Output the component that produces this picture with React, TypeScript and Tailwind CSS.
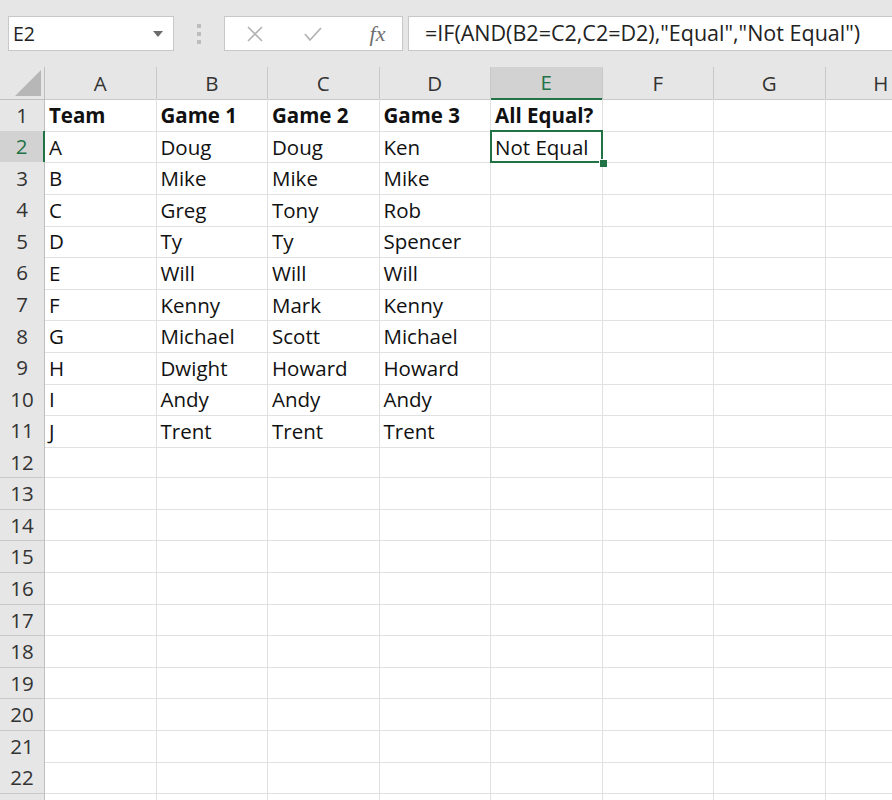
import React from "react";

const COLS = ["A", "B", "C", "D", "E", "F", "G", "H"];
const DATA: string[][] = [
  ["Team", "Game 1", "Game 2", "Game 3", "All Equal?"],
  ["A", "Doug", "Doug", "Ken", "Not Equal"],
  ["B", "Mike", "Mike", "Mike"],
  ["C", "Greg", "Tony", "Rob"],
  ["D", "Ty", "Ty", "Spencer"],
  ["E", "Will", "Will", "Will"],
  ["F", "Kenny", "Mark", "Kenny"],
  ["G", "Michael", "Scott", "Michael"],
  ["H", "Dwight", "Howard", "Howard"],
  ["I", "Andy", "Andy", "Andy"],
  ["J", "Trent", "Trent", "Trent"],
];

const font = { fontFamily: '"Open Sans", "Noto Sans", sans-serif' };

export default function App() {
  const rows = Array.from({ length: 23 }, (_, i) => i + 1);
  return (
    <div
      className="w-[892px] h-[800px] overflow-hidden bg-white text-[#222]"
      style={font}
    >
      {/* Formula bar */}
      <div className="h-[67px] bg-[#e6e6e6] flex items-start pt-[16px] pl-[8px]">
        <div className="w-[166px] h-[35px] bg-white border border-[#c8c8c8] flex items-center justify-between pl-[4px] pr-[10px]">
          <span className="text-[19.5px] text-[#222]">E2</span>
          <svg width="10" height="6" viewBox="0 0 10 6">
            <path d="M0 0 L10 0 L5 6 Z" fill="#6b6b6b" />
          </svg>
        </div>
        <div className="w-[50px] h-[35px] flex flex-col items-center justify-center gap-[4px]">
          <div className="w-[4px] h-[4px] bg-[#bdbdbd]" />
          <div className="w-[4px] h-[4px] bg-[#bdbdbd]" />
          <div className="w-[4px] h-[4px] bg-[#bdbdbd]" />
        </div>
        <div className="w-[179px] h-[35px] bg-white border border-[#c8c8c8] flex items-center">
          <div className="w-[58px] flex justify-center pl-[2px]">
            <svg width="18" height="18" viewBox="0 0 18 18">
              <path d="M2 2 L16 16 M16 2 L2 16" stroke="#b3b3b3" strokeWidth="1.6" />
            </svg>
          </div>
          <div className="w-[60px] flex justify-center">
            <svg width="20" height="18" viewBox="0 0 20 18">
              <path d="M2 9 L7 15 L18 3" stroke="#b3b3b3" strokeWidth="1.8" fill="none" />
            </svg>
          </div>
          <div className="flex-1 flex justify-center pl-[10px]">
            <span
              className="italic text-[22px] text-[#6f6f6f] leading-none"
              style={{ fontFamily: '"Liberation Serif", "DejaVu Serif", serif' }}
            >
              fx
            </span>
          </div>
        </div>
        <div className="ml-[5px] flex-1 h-[35px] bg-white border border-[#c8c8c8] border-r-0 flex items-center pl-[16px]">
          <span className="text-[21.5px] text-[#222] whitespace-nowrap">
            =IF(AND(B2=C2,C2=D2),"Equal","Not Equal")
          </span>
        </div>
      </div>

      {/* Column headers */}
      <div className="grid grid-cols-[45px_repeat(8,111.5px)] h-[32px] bg-[#e6e6e6]">
        <div className="relative border-r border-b border-[#bfbfbf]">
          <svg className="absolute right-[3px] bottom-[3px]" width="26" height="26" viewBox="0 0 26 26">
            <path d="M26 0 L26 26 L0 26 Z" fill="#b7b7b7" />
          </svg>
        </div>
        {COLS.map((c) => {
          const sel = c === "E";
          return (
            <div
              key={c}
              className={
                sel
                  ? "flex items-center justify-center border-r border-[#c8c8c8] bg-[#d2d2d2] border-b-2 border-b-[#217346] text-[#217346] text-[20.5px]"
                  : "flex items-center justify-center border-r border-b border-[#c8c8c8] text-[#333] text-[20.5px]"
              }
            >
              {c}
            </div>
          );
        })}
      </div>

      {/* Rows */}
      {rows.map((r) => {
        const data = DATA[r - 1] || [];
        const selRow = r === 2;
        return (
          <div key={r} className="grid grid-cols-[45px_repeat(8,111.5px)] h-[31.6px]">
            <div
              className={
                selRow
                  ? "flex items-center justify-center bg-[#d2d2d2] border-b border-[#c8c8c8] border-r-2 border-r-[#217346] text-[#217346] text-[20.5px]"
                  : "flex items-center justify-center bg-[#e6e6e6] border-b border-[#c8c8c8] border-r border-r-[#bfbfbf] text-[#333] text-[20.5px]"
              }
            >
              {r <= 22 ? r : ""}
            </div>
            {COLS.map((c, ci) => {
              const text = data[ci] || "";
              const sel = selRow && c === "E";
              return (
                <div
                  key={c}
                  className={
                    "relative flex items-center pl-[4px] pt-[1px] border-r border-b border-[#e1e1e1] text-[20.5px] whitespace-nowrap overflow-visible " +
                    (r === 1 ? "font-bold text-[#111]" : "text-[#111]")
                  }
                >
                  {text}
                  {sel && (
                    <>
                      <div className="absolute z-10 left-[-1px] top-[-1px] right-[-1px] bottom-[-1px] border-2 border-[#217346]" />
                      <div className="absolute z-20 right-[-5px] bottom-[-5px] w-[8px] h-[8px] bg-[#217346] border-t border-l border-white" />
                    </>
                  )}
                </div>
              );
            })}
          </div>
        );
      })}
    </div>
  );
}
